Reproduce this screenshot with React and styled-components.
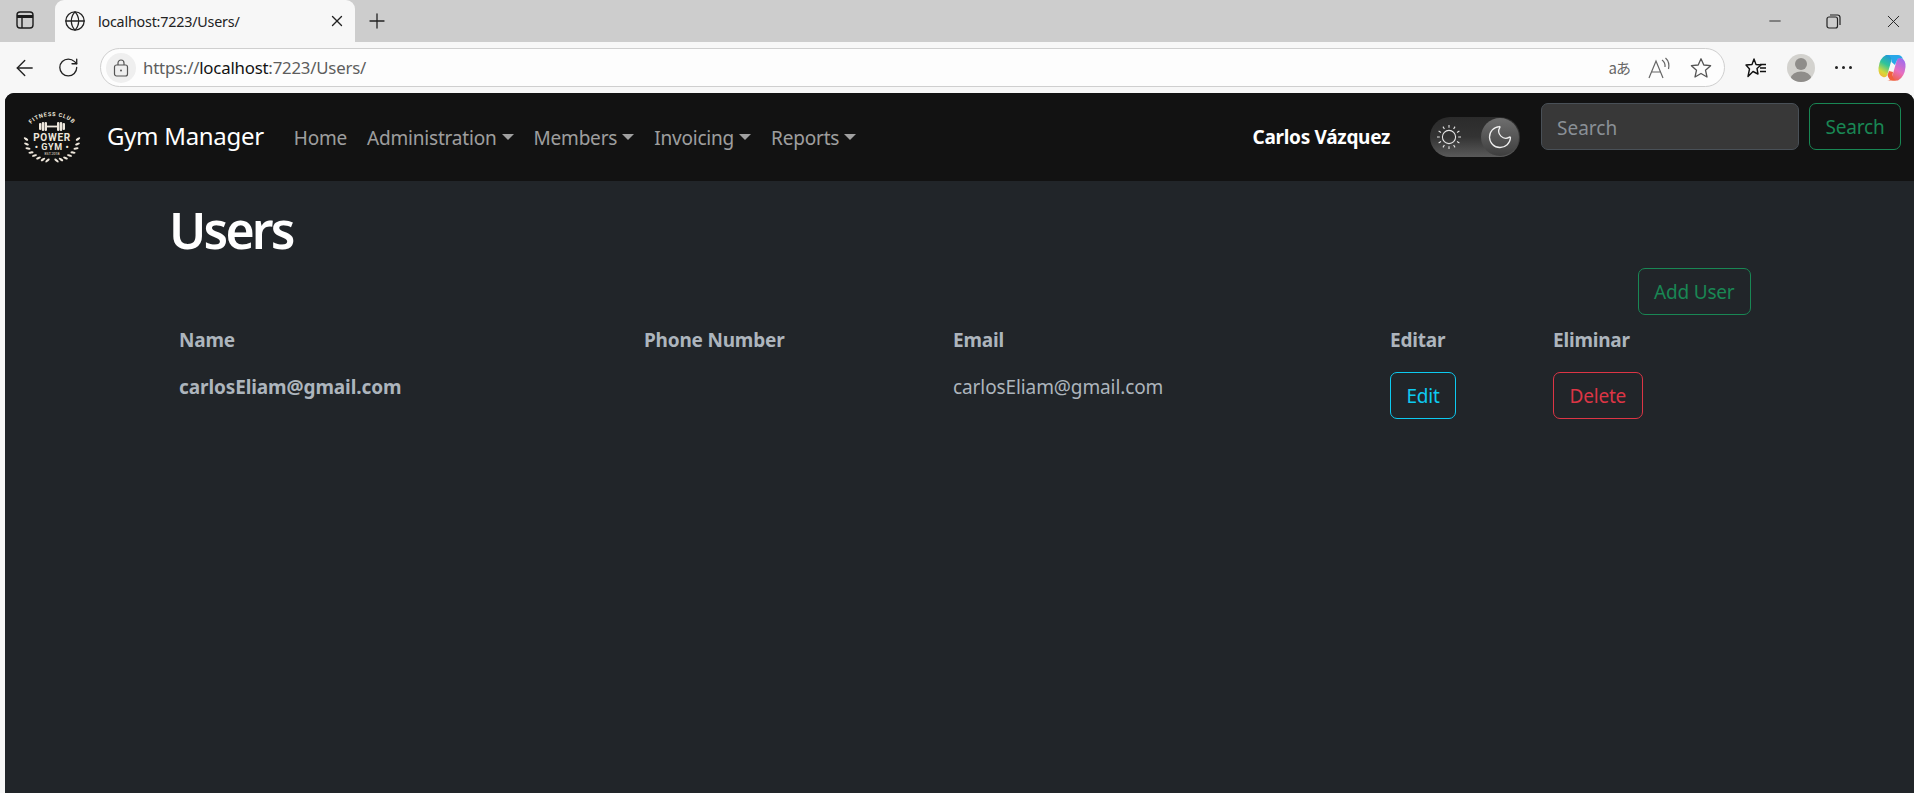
import styled, { createGlobalStyle } from "styled-components";
import { Globe, X, Plus, ArrowLeft, RotateCw, Minus, Moon } from "lucide-react";

const GlobalStyle = createGlobalStyle`
  html, body {
    margin: 0;
    padding: 0;
    height: 100%;
    overflow: hidden;
    background: #f7f7f7;
  }
  * {
    box-sizing: border-box;
  }
`;

const UI_FONT = `"Noto Sans", "Open Sans", sans-serif`;

// leaves of the laurel in the logo: x, y, angle (left side, the right one is mirrored)
const LAUREL = [
  [4, 32, 80], [4.5, 37, 70], [6, 41.5, 55], [9, 45.5, 40],
  [12.5, 48.5, 30], [16.5, 51, 20], [21, 52.5, 10], [25.5, 53.5, 5],
];

const SUN_RAYS = [0, 30, 60, 90, 120, 150, 180, 210, 240, 270, 300, 330];

function App() {
  return (
    <Screen>
      <GlobalStyle />
      <TabStrip>
        <SidebarButton>
          <svg width="18" height="18" viewBox="0 0 18 18" fill="none" stroke="#1c1c1c" strokeWidth="1.4">
            <rect x="1" y="1" width="16" height="16" rx="3" />
            <path d="M1 5.5 H17" strokeWidth="3" />
            <path d="M6 5 V17" />
          </svg>
        </SidebarButton>
        <Tab>
          <Globe size={22} strokeWidth={1.4} color="#222" />
          <TabTitle>localhost:7223/Users/</TabTitle>
          <X size={18} strokeWidth={1.8} color="#222" />
        </Tab>
        <NewTab>
          <Plus size={24} strokeWidth={1.3} color="#222" />
        </NewTab>
        <WindowControls>
          <Minus size={18} strokeWidth={1.2} color="#222" />
          <svg width="15" height="15" viewBox="0 0 15 15" fill="none" stroke="#222" strokeWidth="1.2">
            <rect x="1" y="3" width="10.5" height="11" rx="2" />
            <path d="M4 1 H11.5 Q14 1 14 3.5 V11" />
          </svg>
          <X size={21} strokeWidth={1.1} color="#222" />
        </WindowControls>
      </TabStrip>

      <Toolbar>
        <ArrowLeft size={26} strokeWidth={1.3} color="#222" />
        <RotateCw size={23} strokeWidth={1.4} color="#222" />
        <AddressBar>
          <LockBadge>
            <svg width="16" height="18" viewBox="0 0 16 18" fill="none" stroke="#555" strokeWidth="1.2">
              <rect x="1.5" y="6" width="13" height="11" rx="2" />
              <path d="M5 6 V4 A3 3 0 0 1 11 4 V6" />
              <circle cx="8" cy="11.5" r="1" fill="#555" stroke="none" />
            </svg>
          </LockBadge>
          <UrlText>
            https://<strong>localhost</strong>:7223/Users/
          </UrlText>
          <AddressIcons>
            <TranslateGlyph>aあ</TranslateGlyph>
            <svg width="24" height="22" viewBox="0 0 24 22" fill="none" stroke="#666" strokeWidth="1.2">
              <path d="M1 21 L8 4 L15 21 M3.5 15 H12.5" />
              <path d="M14 3 Q17.5 5.5 17 10 M17.5 1 Q22 5 20.5 12" />
            </svg>
            <svg width="22" height="22" viewBox="0 0 22 22" fill="none" stroke="#555" strokeWidth="1.3" strokeLinejoin="round">
              <path d="M11 1.8 L13.8 8 L20.6 8.7 L15.5 13.2 L17 20 L11 16.5 L5 20 L6.5 13.2 L1.4 8.7 L8.2 8 Z" />
            </svg>
          </AddressIcons>
        </AddressBar>
        <ToolbarIcons>
          <svg width="22" height="22" viewBox="0 0 22 22" fill="none" stroke="#111" strokeWidth="1.4" strokeLinejoin="round">
            <path d="M9 2 L11 7.5 L16 8 L12 11.5 L13 17 L8 14.5 L3 19.5 L4.5 12 L1 8 L7 7.5 Z" />
            <path d="M15 7.5 H21 M15 11 H21 M15 14.5 H21" />
          </svg>
          <Avatar>
            <svg width="28" height="28" viewBox="0 0 28 28">
              <circle cx="14" cy="10" r="6" fill="#8f8d8a" />
              <ellipse cx="14" cy="24" rx="10" ry="6.5" fill="#8f8d8a" />
            </svg>
          </Avatar>
          <MoreDots>
            <span />
            <span />
            <span />
          </MoreDots>
          <svg width="28" height="27" viewBox="0 0 28 27">
            <defs>
              <linearGradient id="copA" x1="0.7" y1="0" x2="0.2" y2="1">
                <stop offset="0" stopColor="#1f8fe6" />
                <stop offset="0.45" stopColor="#2fc49a" />
                <stop offset="0.8" stopColor="#d7d93a" />
                <stop offset="1" stopColor="#f2b63a" />
              </linearGradient>
              <linearGradient id="copB" x1="0.8" y1="0" x2="0.3" y2="1">
                <stop offset="0" stopColor="#9a6cf0" />
                <stop offset="0.55" stopColor="#e86fc0" />
                <stop offset="1" stopColor="#f0603c" />
              </linearGradient>
            </defs>
            <path d="M8 1 H19 Q15 1 13.5 6 L9.5 20 Q8.5 24 5 23 Q0 21 0.5 14 Q1.5 4 8 1 Z" fill="url(#copA)" />
            <path d="M20 26.5 H9 Q13 26.5 14.5 21.5 L18.5 7 Q19.5 3 23 4 Q28 6 27.5 13 Q26.5 23 20 26.5 Z" fill="url(#copB)" />
            <path d="M10 1 H20 Q23.5 1 25 5 Q21.5 3 19.5 5 Q18 8 17 11 L13.5 8 Q14 3 10 1 Z" fill="#29a7e8" />
            <path d="M9.5 21 Q10.5 26 15 26.5 L19 26.5 Q14.5 26 14.5 21 L15 18 L11 17 Z" fill="#f0603c" />
          </svg>
        </ToolbarIcons>
      </Toolbar>

      <Page>
        <Navbar>
          <Brand>
            <svg width="60" height="56" viewBox="0 0 60 56" fill="#eee7dc">
              <path id="logoArc" d="M7 23 A23 14 0 0 1 53 23" fill="none" />
              <text fontFamily="Roboto, sans-serif" fontSize="5.6" fontWeight="700" letterSpacing="0.7" textAnchor="middle">
                <textPath href="#logoArc" startOffset="50%">FITNESS CLUB</textPath>
              </text>
              <rect x="17" y="16" width="2.4" height="7" rx="1.1" />
              <rect x="19.8" y="15" width="2.4" height="9" rx="1.1" />
              <rect x="22.6" y="15" width="2.4" height="9" rx="1.1" />
              <rect x="25" y="18.6" width="10" height="1.8" />
              <rect x="35" y="15" width="2.4" height="9" rx="1.1" />
              <rect x="37.8" y="15" width="2.4" height="9" rx="1.1" />
              <rect x="40.6" y="16" width="2.4" height="7" rx="1.1" />
              <text x="30" y="34" textAnchor="middle" fontFamily="Roboto, sans-serif" fontSize="10" fontWeight="700" letterSpacing="0.7">POWER</text>
              <text x="30" y="43" textAnchor="middle" fontFamily="Roboto, sans-serif" fontSize="9" fontWeight="700" letterSpacing="0.6">• GYM •</text>
              <text x="30" y="48" textAnchor="middle" fontFamily="Roboto, sans-serif" fontSize="3.6">EST.2018</text>
              {LAUREL.map(([x, y, a]) => (
                <g key={x}>
                  <ellipse cx={x} cy={y} rx="2.6" ry="1.1" transform={`rotate(${a - 45} ${x} ${y})`} />
                  <ellipse cx={60 - x} cy={y} rx="2.6" ry="1.1" transform={`rotate(${45 - a} ${60 - x} ${y})`} />
                </g>
              ))}
            </svg>
            <BrandName>Gym Manager</BrandName>
          </Brand>
          <NavLinks>
            <NavLink>Home</NavLink>
            <NavLink $caret>Administration</NavLink>
            <NavLink $caret>Members</NavLink>
            <NavLink $caret>Invoicing</NavLink>
            <NavLink $caret>Reports</NavLink>
          </NavLinks>
          <NavRight>
            <UserName>Carlos Vázquez</UserName>
            <ThemeToggle>
              <SunSlot>
                <svg width="26" height="26" viewBox="0 0 26 26" fill="none" stroke="#e4e4e4" strokeWidth="1.1">
                  <circle cx="13" cy="13" r="6.6" />
                  {SUN_RAYS.map((a) => (
                    <path key={a} d="M13 3.8 V1" transform={`rotate(${a} 13 13)`} />
                  ))}
                </svg>
              </SunSlot>
              <MoonKnob>
                <Moon size={28} strokeWidth={1.1} color="#eee" />
              </MoonKnob>
            </ThemeToggle>
            <SearchForm>
              <SearchInput placeholder="Search" readOnly />
              <OutlineButton $color="#198754">Search</OutlineButton>
            </SearchForm>
          </NavRight>
        </Navbar>

        <Main>
          <Heading>Users</Heading>
          <ActionRow>
            <OutlineButton $color="#198754">Add User</OutlineButton>
          </ActionRow>
          <UsersTable>
            <colgroup>
              <col style={{ width: 465 }} />
              <col style={{ width: 309 }} />
              <col style={{ width: 437 }} />
              <col style={{ width: 163 }} />
              <col />
            </colgroup>
            <thead>
              <tr>
                <HeadCell>Name</HeadCell>
                <HeadCell>Phone Number</HeadCell>
                <HeadCell>Email</HeadCell>
                <HeadCell>Editar</HeadCell>
                <HeadCell>Eliminar</HeadCell>
              </tr>
            </thead>
            <tbody>
              <tr>
                <NameCell>carlosEliam@gmail.com</NameCell>
                <BodyCell></BodyCell>
                <BodyCell>carlosEliam@gmail.com</BodyCell>
                <ButtonCell>
                  <OutlineButton $color="#0dcaf0">Edit</OutlineButton>
                </ButtonCell>
                <ButtonCell>
                  <OutlineButton $color="#dc3545">Delete</OutlineButton>
                </ButtonCell>
              </tr>
            </tbody>
          </UsersTable>
        </Main>
      </Page>
    </Screen>
  );
}

const Screen = styled.div`
  display: flex;
  flex-direction: column;
  height: 793px;
  overflow: hidden;
  font-family: ${UI_FONT};
`;

const TabStrip = styled.div`
  display: flex;
  align-items: stretch;
  height: 42px;
  flex: none;
  background: #cdcdcd;
`;

const SidebarButton = styled.div`
  width: 55px;
  display: flex;
  align-items: center;
  justify-content: center;
  padding-bottom: 2px;
  padding-right: 5px;
`;

const Tab = styled.div`
  width: 300px;
  display: flex;
  align-items: center;
  gap: 12px;
  padding: 0 9px;
  background: #f7f7f7;
  border-radius: 9px 9px 0 0;
`;

const TabTitle = styled.span`
  flex: 1;
  font-size: 14.3px;
  color: #222;
  letter-spacing: -0.2px;
`;

const NewTab = styled.div`
  width: 44px;
  display: flex;
  align-items: center;
  justify-content: center;
`;

const WindowControls = styled.div`
  margin-left: auto;
  display: flex;
  align-items: center;
  gap: 42px;
  padding-right: 10px;
`;

const Toolbar = styled.div`
  display: flex;
  align-items: center;
  height: 51px;
  flex: none;
  padding: 0 8px 0 12px;
  gap: 20px;
  background: #f7f7f7;
`;

const AddressBar = styled.div`
  flex: none;
  width: 1625px;
  height: 39px;
  display: flex;
  align-items: center;
  padding: 0 12px 0 5px;
  gap: 7px;
  background: #fdfdfd;
  border: 1px solid #cfcfcf;
  border-radius: 20px;
`;

const LockBadge = styled.div`
  width: 30px;
  height: 30px;
  display: flex;
  align-items: center;
  justify-content: center;
  border-radius: 50%;
  background: #efefef;
`;

const UrlText = styled.span`
  flex: 1;
  font-size: 16.8px;
  letter-spacing: -0.2px;
  color: #5d5d5d;

  strong {
    font-weight: 400;
    color: #111;
  }
`;

const AddressIcons = styled.div`
  display: flex;
  align-items: center;
  gap: 18px;
`;

const TranslateGlyph = styled.span`
  font-family: "Noto Sans CJK JP", "Noto Sans", sans-serif;
  font-size: 15px;
  color: #666;
  letter-spacing: -1px;
`;

const ToolbarIcons = styled.div`
  display: flex;
  align-items: center;
  gap: 20px;
`;

const Avatar = styled.div`
  width: 28px;
  height: 28px;
  border-radius: 50%;
  overflow: hidden;
  background: #d3d2ce;
`;

const MoreDots = styled.div`
  display: flex;
  gap: 4px;
  width: 20px;
  margin-right: 3px;

  span {
    width: 3px;
    height: 3px;
    border-radius: 50%;
    background: #222;
  }
`;

const Page = styled.div`
  flex: 1;
  margin-left: 5px;
  border-radius: 9px 9px 0 0;
  overflow: hidden;
  background: #212529;
  color: #dee2e6;
`;

const Navbar = styled.nav`
  height: 88px;
  display: flex;
  align-items: flex-start;
  padding: 10px 13px 0 17px;
  background: #121212;
`;

const Brand = styled.div`
  display: flex;
  align-items: center;
  gap: 25px;
  margin-top: 4px;
`;

const BrandName = styled.span`
  font-size: 24px;
  color: #fff;
  letter-spacing: -0.3px;
`;

const NavLinks = styled.div`
  display: flex;
  align-items: center;
  gap: 20px;
  margin-left: 30px;
  margin-top: 22px;
`;

const NavLink = styled.a`
  font-size: 19px;
  color: rgba(255, 255, 255, 0.6);
  letter-spacing: -0.2px;

  ${(p) =>
    p.$caret &&
    `
    &::after {
      content: "";
      display: inline-block;
      margin-left: 5px;
      vertical-align: 5px;
      border-top: 6px solid;
      border-left: 6px solid transparent;
      border-right: 6px solid transparent;
    }
  `}
`;

const NavRight = styled.div`
  margin-left: auto;
  display: flex;
  align-items: flex-start;
`;

const UserName = styled.span`
  font-size: 19px;
  font-weight: 700;
  color: #fff;
  margin-top: 21px;
  letter-spacing: -0.3px;
`;

const ThemeToggle = styled.div`
  width: 90px;
  height: 40px;
  margin: 14px 21px 0 40px;
  display: flex;
  align-items: center;
  justify-content: space-between;
  border-radius: 20px;
  background: linear-gradient(180deg, #2b2b2b 0%, #333 50%, #5a5a5a 100%);
`;

const SunSlot = styled.div`
  display: flex;
  padding-left: 6px;
`;

const MoonKnob = styled.div`
  width: 38px;
  height: 38px;
  margin-right: 1px;
  display: flex;
  align-items: center;
  justify-content: center;
  border-radius: 50%;
  background: linear-gradient(180deg, #6e6e6e 0%, #3e3e3e 100%);
`;

const SearchForm = styled.div`
  display: flex;
  gap: 10px;
`;

const SearchInput = styled.input`
  width: 258px;
  height: 47px;
  padding: 2px 15px 0;
  font: 400 19px ${UI_FONT};
  color: #dee2e6;
  background: #383838;
  border: 1px solid #495057;
  border-radius: 7px;
  outline: none;

  &::placeholder {
    color: #8a9096;
  }
`;

const OutlineButton = styled.button`
  height: 47px;
  padding: 0 15.5px;
  font: 400 19px ${UI_FONT};
  letter-spacing: -0.2px;
  color: ${(p) => p.$color};
  background: transparent;
  border: 1px solid ${(p) => p.$color};
  border-radius: 7px;
`;

const Main = styled.main`
  padding: 0 163px 0 166px;
`;

const Heading = styled.h1`
  margin: 0;
  padding-top: 14px;
  margin-left: -2px;
  font-size: 50px;
  line-height: 70px;
  font-weight: 600;
  color: #fff;
  letter-spacing: -2.8px;
`;

const ActionRow = styled.div`
  display: flex;
  justify-content: flex-end;
  margin-top: 3px;
`;

const UsersTable = styled.table`
  width: 100%;
  table-layout: fixed;
  border-collapse: collapse;
  margin-top: 4px;
`;

const HeadCell = styled.th`
  padding: 8px;
  text-align: left;
  font-size: 19px;
  font-weight: 700;
  color: #adb5bd;
  letter-spacing: -0.2px;
`;

const BodyCell = styled.td`
  padding: 13px 8px 8px;
  vertical-align: top;
  font-size: 19px;
  color: #adb5bd;
  letter-spacing: -0.1px;
`;

const NameCell = styled(BodyCell)`
  font-weight: 700;
`;

const ButtonCell = styled(BodyCell)`
  padding-top: 11px;
`;

export default App;
